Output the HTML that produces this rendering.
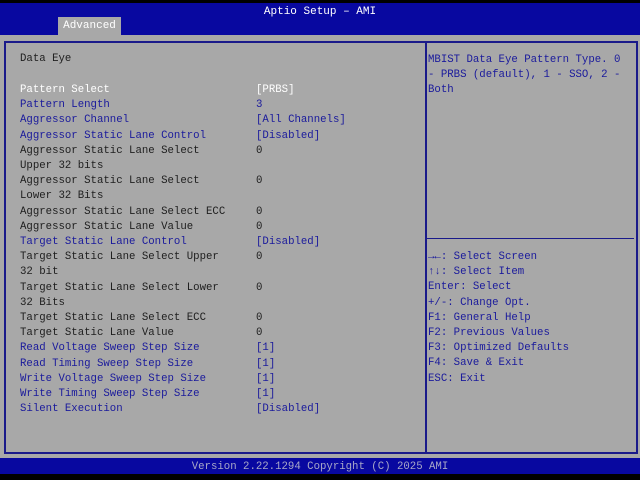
<!DOCTYPE html>
<html><head><style>
body{margin:0;width:640px;height:480px;background:#000;position:relative;overflow:hidden;font-family:"Liberation Mono","DejaVu Sans Mono",monospace;font-size:10.7px;}
div{position:absolute;white-space:pre;}
.hdr{left:0;top:3px;width:640px;height:32px;background:#0808a0;}
.gray{left:0;top:35px;width:640px;height:423px;background:#a8a8a8;}
.ftr{left:0;top:458px;width:640px;height:16px;background:#0808a0;}
.b{color:#1a1a9c}.k{color:#1e1e1e}.w{color:#fff}
</style></head><body>
<div class="hdr"></div>
<div class="w" style="left:0;top:6px;width:640px;text-align:center;font-size:11px">Aptio Setup – AMI</div>
<div style="left:58px;top:17px;width:63px;height:18px;background:#a8a8a8;color:#fff;text-align:center;line-height:19px;font-size:11px">Advanced</div>
<div class="gray"></div>
<div style="left:4px;top:41px;width:420px;height:409px;border:2px solid #1a1a8a;border-right:none"></div>
<div style="left:425px;top:41px;width:209px;height:409px;border:2px solid #1a1a8a"></div>
<div style="left:427px;top:238px;width:207px;height:1px;background:#1a1a8a"></div>
<div class="k" style="left:20px;top:53px">Data Eye</div>
<div style="left:20px;top:83px;line-height:15.2px" class="k"><span class="w">Pattern Select</span>
<span class="b">Pattern Length</span>
<span class="b">Aggressor Channel</span>
<span class="b">Aggressor Static Lane Control</span>
Aggressor Static Lane Select
Upper 32 bits
Aggressor Static Lane Select
Lower 32 Bits
Aggressor Static Lane Select ECC
Aggressor Static Lane Value
<span class="b">Target Static Lane Control</span>
Target Static Lane Select Upper
32 bit
Target Static Lane Select Lower
32 Bits
Target Static Lane Select ECC
Target Static Lane Value
<span class="b">Read Voltage Sweep Step Size</span>
<span class="b">Read Timing Sweep Step Size</span>
<span class="b">Write Voltage Sweep Step Size</span>
<span class="b">Write Timing Sweep Step Size</span>
<span class="b">Silent Execution</span></div>
<div style="left:256px;top:83px;line-height:15.2px" class="k"><span class="w">[PRBS]</span>
<span class="b">3</span>
<span class="b">[All Channels]</span>
<span class="b">[Disabled]</span>
0

0

0
0
<span class="b">[Disabled]</span>
0

0

0
0
<span class="b">[1]</span>
<span class="b">[1]</span>
<span class="b">[1]</span>
<span class="b">[1]</span>
<span class="b">[Disabled]</span></div>
<div class="b" style="left:428px;top:53px;line-height:15.2px">MBIST Data Eye Pattern Type. 0
- PRBS (default), 1 - SSO, 2 -
Both</div>
<div class="b" style="left:428px;top:250px;line-height:15.2px">→←: Select Screen
↑↓: Select Item
Enter: Select
+/-: Change Opt.
F1: General Help
F2: Previous Values
F3: Optimized Defaults
F4: Save &amp; Exit
ESC: Exit</div>
<div class="ftr"></div>
<div style="left:0;top:461px;width:640px;text-align:center;color:#a8a8c8;font-size:10.7px">Version 2.22.1294 Copyright (C) 2025 AMI</div>
</body></html>
